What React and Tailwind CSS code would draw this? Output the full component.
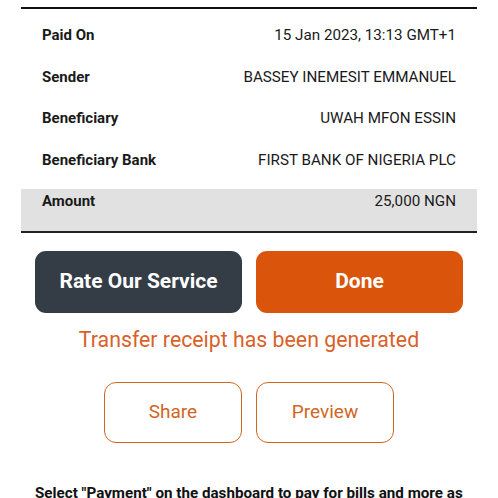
export default function App() {
  const rows = [
    ["Paid On", "15 Jan 2023, 13:13 GMT+1"],
    ["Sender", "BASSEY INEMESIT EMMANUEL"],
    ["Beneficiary", "UWAH MFON ESSIN"],
    ["Beneficiary Bank", "FIRST BANK OF NIGERIA PLC"],
  ];
  return (
    <div className="w-[498px] h-[498px] overflow-hidden bg-white font-['Roboto',sans-serif] text-[#1a1a1a]">
      <div className="pt-[7px] px-[21px]">
        <div className="border-t-2 border-[#111]" />
        <div className="mt-[14px]">
          {rows.map(([l, v]) => (
            <div key={l} className="h-[41.5px] pt-[3px] px-[21px] flex justify-between">
              <span className="text-[15px] leading-[18px] font-bold">{l}</span>
              <span className="text-[15.2px] leading-[18px]">{v}</span>
            </div>
          ))}
          <div className="h-[41.5px] pt-[3px] px-[21px] flex justify-between bg-[#e1e1e1]">
            <span className="text-[15px] leading-[18px] font-bold">Amount</span>
            <span className="text-[15.2px] leading-[18px]">25,000 NGN</span>
          </div>
        </div>
        <div className="border-t-2 border-[#222]" />
      </div>
      <div className="px-[35px] mt-[18px] flex gap-[14px]">
        <button className="flex-1 h-[62px] rounded-[11px] bg-[#343c46] text-white text-[21px] font-bold">
          Rate Our Service
        </button>
        <button className="flex-1 h-[62px] rounded-[11px] bg-[#da540c] text-white text-[21px] font-bold">
          Done
        </button>
      </div>
      <div className="mt-[15px] text-center text-[21.3px] leading-[24px] text-[#d8622a]">
        Transfer receipt has been generated
      </div>
      <div className="mt-[30px] flex justify-center gap-[14px]">
        <button className="w-[138px] h-[61px] rounded-[12px] border-[1.5px] border-[#d2661f] text-[#d2661f] text-[19px]">
          Share
        </button>
        <button className="w-[138px] h-[61px] rounded-[12px] border-[1.5px] border-[#d2661f] text-[#d2661f] text-[19px]">
          Preview
        </button>
      </div>
      <div className="mt-[41px] px-[35px] text-[15.2px] leading-[18px] font-bold text-[#111] whitespace-nowrap">
        Select "Payment" on the dashboard to pay for bills and more as
      </div>
    </div>
  );
}
